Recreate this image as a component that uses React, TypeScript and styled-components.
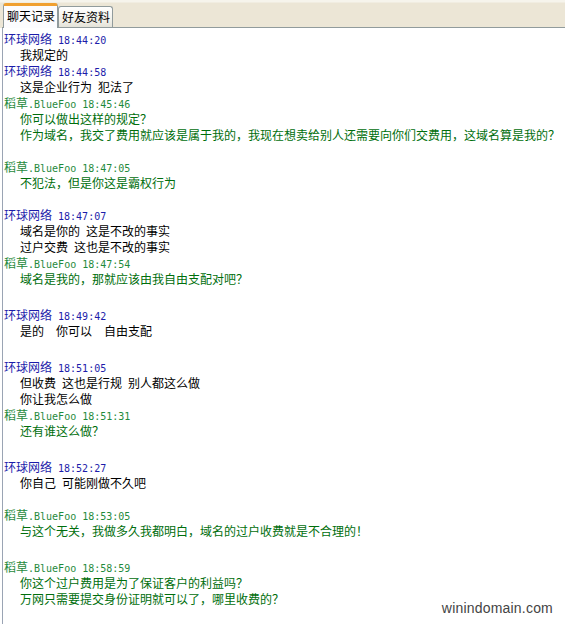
import React from 'react'
import styled, { createGlobalStyle } from 'styled-components'

const GlobalStyle = createGlobalStyle`
  html, body {
    margin: 0;
    padding: 0;
    background: #fff;
  }
`

const cjk = `"Noto Sans CJK SC", "Noto Sans", sans-serif`

type Who = 'wq' | 'bf'

const people: Record<Who, { name: string; suffix: string }> = {
  wq: { name: '环球网络', suffix: '' },
  bf: { name: '稻草', suffix: '.BlueFoo' },
}

const chatlog: { who: Who; time: string; lines: string[]; gap: number }[] = [
  { who: 'wq', time: '18:44:20', lines: ['我规定的'], gap: 0 },
  { who: 'wq', time: '18:44:58', lines: ['这是企业行为 犯法了'], gap: 0 },
  {
    who: 'bf',
    time: '18:45:46',
    lines: [
      '你可以做出这样的规定？',
      '作为域名，我交了费用就应该是属于我的，我现在想卖给别人还需要向你们交费用，这域名算是我的？',
    ],
    gap: 16,
  },
  { who: 'bf', time: '18:47:05', lines: ['不犯法，但是你这是霸权行为'], gap: 16 },
  { who: 'wq', time: '18:47:07', lines: ['域名是你的 这是不改的事实', '过户交费 这也是不改的事实'], gap: 0 },
  { who: 'bf', time: '18:47:54', lines: ['域名是我的，那就应该由我自由支配对吧？'], gap: 20 },
  { who: 'wq', time: '18:49:42', lines: ['是的  你可以  自由支配'], gap: 20 },
  { who: 'wq', time: '18:51:05', lines: ['但收费 这也是行规 别人都这么做', '你让我怎么做'], gap: 0 },
  { who: 'bf', time: '18:51:31', lines: ['还有谁这么做？'], gap: 20 },
  { who: 'wq', time: '18:52:27', lines: ['你自己 可能刚做不久吧'], gap: 16 },
  { who: 'bf', time: '18:53:05', lines: ['与这个无关，我做多久我都明白，域名的过户收费就是不合理的！'], gap: 20 },
  {
    who: 'bf',
    time: '18:58:59',
    lines: ['你这个过户费用是为了保证客户的利益吗？', '万网只需要提交身份证明就可以了，哪里收费的？'],
    gap: 0,
  },
]

const Window = styled.div`
  position: relative;
  width: 565px;
  height: 624px;
  overflow: hidden;
  background: #fff;
  font-family: ${cjk};
`

const TabStrip = styled.div`
  background: linear-gradient(#f6f4ec 0, #f6f4ec 2px, #ece6d6 3px, #ece6d6 100%);
`

const TabRow = styled.div`
  margin-left: 2px;
  height: 27px;
  display: flex;
  align-items: flex-end;
  padding-left: 1px;
  border-bottom: 1px solid #919b9c;
`

const Tab = styled.div<{ $active?: boolean }>`
  box-sizing: border-box;
  height: ${p => (p.$active ? '25px' : '21px')};
  margin-bottom: ${p => (p.$active ? '-1px' : '0')};
  padding: 0 2px 0 3px;
  border: 1px solid #919b9c;
  border-bottom: none;
  border-top: ${p => (p.$active ? '3px solid #f0a030' : '1px solid #919b9c')};
  border-radius: 3px 3px 0 0;
  background: ${p => (p.$active ? '#fcfcfe' : 'linear-gradient(#ffffff, #f0efe8 70%, #e4e2d8)')};
  font-size: 12px;
  line-height: 19px;
  color: #000;
  white-space: nowrap;
`

const Log = styled.div`
  margin-left: 2px;
  height: 600px;
  border-left: 1px solid #9aa4b4;
  padding: 3px 0 0 1px;
`

const Block = styled.div<{ $gap: number }>`
  margin-bottom: ${p => p.$gap}px;
`

const Header = styled.div<{ $who: Who }>`
  height: 16px;
  line-height: 16px;
  font-size: 12px;
  white-space: pre;
  color: ${p => (p.$who === 'wq' ? '#1c1caa' : '#1f8a3c')};
`

const Mono = styled.span`
  font-family: "DejaVu Sans Mono", "Liberation Mono", monospace;
  font-size: 10px;
`

const Line = styled.div<{ $who: Who }>`
  height: 16px;
  line-height: 16px;
  padding-left: 16px;
  font-size: 12px;
  white-space: pre;
  word-spacing: 3.3px;
  color: ${p => (p.$who === 'wq' ? '#000' : '#006e0c')};
`

const Watermark = styled.div`
  position: absolute;
  right: 12px;
  bottom: 8px;
  font-family: "Liberation Sans", Arial, sans-serif;
  font-size: 14px;
  line-height: 16px;
  color: #444;
  letter-spacing: 0.2px;
`

export default function App() {
  return (
    <>
      <GlobalStyle />
      <Window>
        <TabStrip>
          <TabRow>
            <Tab $active>聊天记录</Tab>
            <Tab>好友资料</Tab>
          </TabRow>
        </TabStrip>
        <Log>
          {chatlog.map((m, i) => (
            <Block key={i} $gap={m.gap}>
              <Header $who={m.who}>
                {people[m.who].name}
                <Mono>{people[m.who].suffix + ' ' + m.time}</Mono>
              </Header>
              {m.lines.map((l, j) => (
                <Line key={j} $who={m.who}>{l}</Line>
              ))}
            </Block>
          ))}
        </Log>
        <Watermark>winindomain.com</Watermark>
      </Window>
    </>
  )
}
